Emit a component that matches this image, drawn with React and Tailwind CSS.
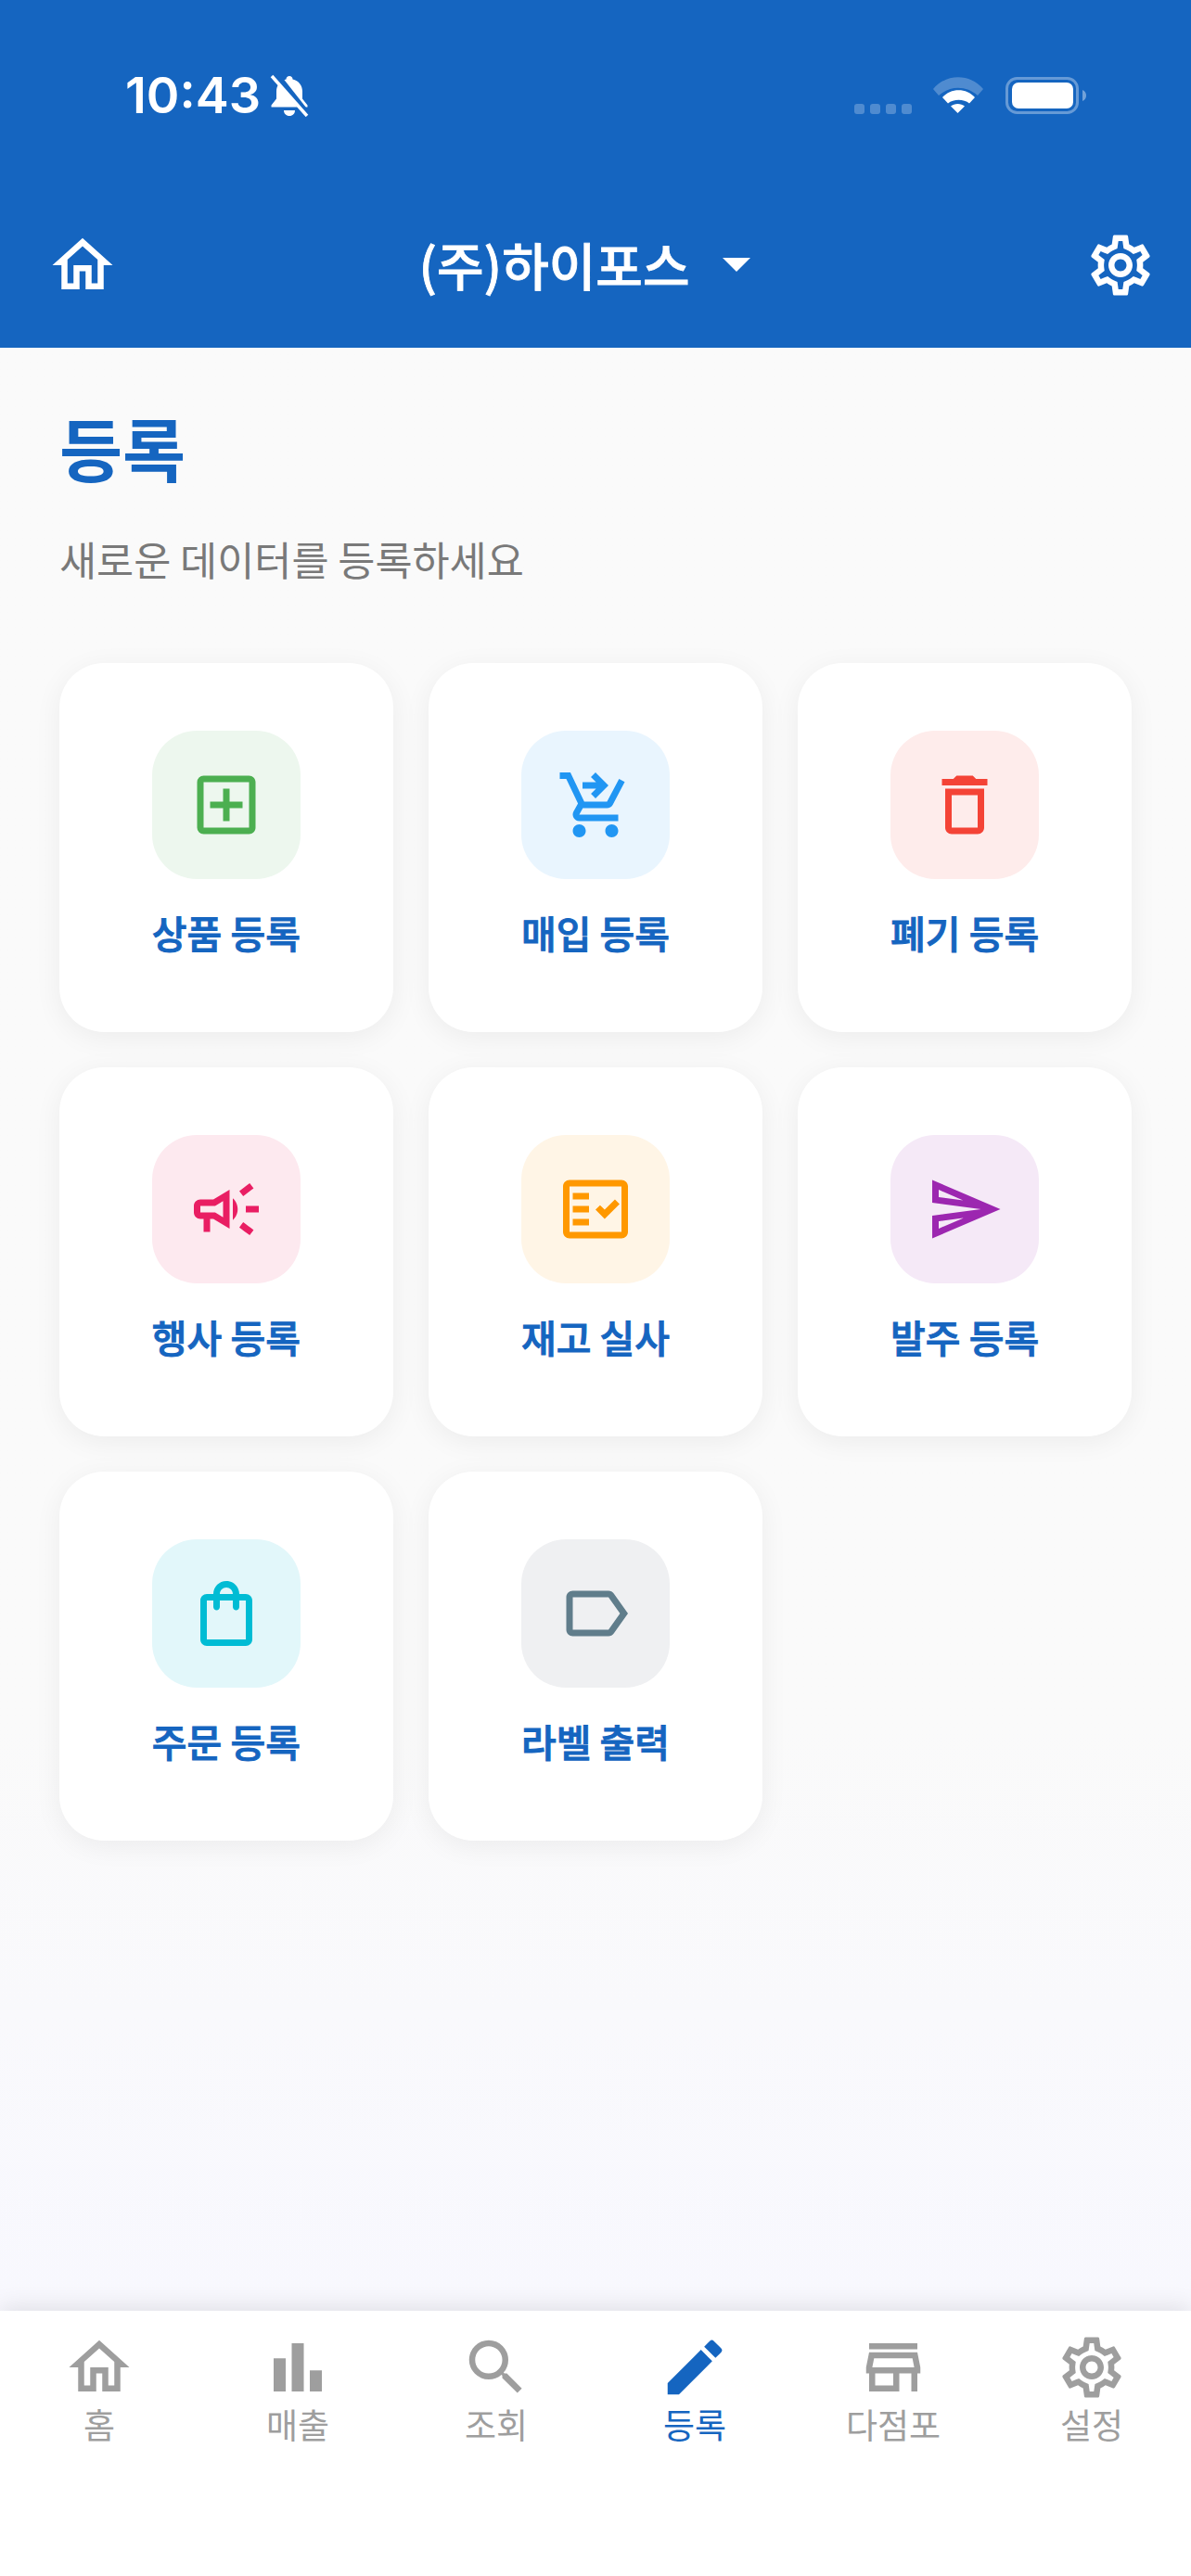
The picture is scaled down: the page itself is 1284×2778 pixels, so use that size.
import React from 'react'
import {
  MdOutlineHome, MdOutlineSettings, MdArrowDropDown, MdOutlineAddBox, MdOutlineShoppingCartCheckout,
  MdOutlineDelete, MdOutlineCampaign, MdOutlineFactCheck, MdOutlineSend, MdOutlineShoppingBag,
  MdOutlineLabel, MdBarChart, MdSearch, MdEdit, MdOutlineStore,
} from 'react-icons/md'

const items = [
  {label: '상품 등록', Icon: MdOutlineAddBox, box: 'bg-[#edf7ee]', color: 'text-[#4caf50]'},
  {label: '매입 등록', Icon: MdOutlineShoppingCartCheckout, box: 'bg-[#e9f5fe]', color: 'text-[#2196f3]'},
  {label: '폐기 등록', Icon: MdOutlineDelete, box: 'bg-[#feeceb]', color: 'text-[#f44336]'},
  {label: '행사 등록', Icon: MdOutlineCampaign, box: 'bg-[#fde9ef]', color: 'text-[#e91e63]'},
  {label: '재고 실사', Icon: MdOutlineFactCheck, box: 'bg-[#fff5e6]', color: 'text-[#ff9800]'},
  {label: '발주 등록', Icon: MdOutlineSend, box: 'bg-[#f5e9f7]', color: 'text-[#9c27b0]'},
  {label: '주문 등록', Icon: MdOutlineShoppingBag, box: 'bg-[#e2f7fa]', color: 'text-[#00bcd4]'},
  {label: '라벨 출력', Icon: MdOutlineLabel, box: 'bg-[#eff0f2]', color: 'text-[#607d8b]'},
]

const tabs = [
  {label: '홈', Icon: MdOutlineHome},
  {label: '매출', Icon: MdBarChart},
  {label: '조회', Icon: MdSearch},
  {label: '등록', Icon: MdEdit, active: true},
  {label: '다점포', Icon: MdOutlineStore},
  {label: '설정', Icon: MdOutlineSettings},
]

function BellOff(){
  return (
    <svg width="44" height="46" viewBox="0 0 44 46" className="ml-[9px]">
      <path d="M22 2c2 0 3.500 1.500 3.500 3.500 6.500 1.500 10.500 6.500 10.500 13v8l5.500 7v2H2.500v-2l5.500-7v-8c0-6.500 4-11.500 10.500-13C18.500 3.500 20 2 22 2z" fill="#fff" />
      <path d="M16 39h12c0 3.500-2.500 6-6 6s-6-2.500-6-6z" fill="#fff" />
      <path d="M8 1l33 42" stroke="#1565c0" strokeWidth="7" />
      <path d="M3 2l38 43" stroke="#fff" strokeWidth="3.500" />
    </svg>
  )
}

function StatusIcons(){
  return (
    <svg width="250" height="44" viewBox="0 0 250 44" className="mr-[113px]">
      <g fill="#fff" fillOpacity="0.25">
        <rect x="0" y="31" width="11" height="11" rx="3" />
        <rect x="17" y="31" width="11" height="11" rx="3" />
        <rect x="34" y="31" width="11" height="11" rx="3" />
        <rect x="51" y="31" width="11" height="11" rx="3" />
      </g>
      <path d="M85 15c14-17 40-17 54 0l-6 7c-12-11-30-11-42 0z" fill="#fff" fillOpacity="0.25" />
      <path d="M95 24c9-10.500 26-10.500 35 0l-6 6.500c-6-5-17-5-23 0z" fill="#fff" />
      <path d="M104 33.500c4-3.500 11-3.500 15 0L111.500 41z" fill="#fff" />
      <rect x="164.500" y="3.500" width="76" height="37" rx="11" fill="none" stroke="#fff" strokeOpacity="0.35" strokeWidth="3" />
      <rect x="170" y="8" width="66" height="28" rx="7" fill="#fff" />
      <path d="M246 16c2.500 1 4 3 4 6s-1.500 5-4 6z" fill="#fff" fillOpacity="0.4" />
    </svg>
  )
}

function Card({item}){
  const {Icon} = item
  return (
    <div className="h-[398px] rounded-[48px] bg-white shadow-[0_6px_30px_rgba(0,0,0,0.06)] flex flex-col items-center pt-[73px]">
      <div className={`w-[160px] h-[160px] rounded-[48px] flex items-center justify-center ${item.box}`}>
        <Icon size={84} className={item.color} />
      </div>
      <div className="mt-[27px] text-[41px] leading-[60px] font-medium [-webkit-text-stroke:1px_#1565c0] text-[#1565c0]">{item.label}</div>
    </div>
  )
}

export default function App(){
  return (
    <div className="w-[1284px] h-[2778px] flex flex-col overflow-hidden font-['Noto_Sans_CJK_KR','Noto_Sans',sans-serif]">
      <header className="h-[375px] shrink-0 bg-[#1565c0] text-white flex flex-col">
        <div className="h-[48px] mt-[79px] flex items-center justify-between pl-[135px]">
          <div className="flex items-center">
            <span className="font-['Inter',sans-serif] text-[54px] leading-[48px] font-semibold">10:43</span>
            <BellOff />
          </div>
          <StatusIcons />
        </div>
        <div className="mt-[121px] h-[72px] flex items-center pl-[50px] pr-[37px]">
          <MdOutlineHome size={78} className="mt-[3px]" />
          <div className="flex-1 flex items-center justify-center mr-[16px]">
            <span className="text-[55px] leading-[72px] font-medium [-webkit-text-stroke:0.8px_white]">(주)하이포스</span>
            <MdArrowDropDown size={72} className="ml-[14px]" />
          </div>
          <MdOutlineSettings size={78} className="mt-[3px]" />
        </div>
      </header>

      <main className="flex-1 bg-gradient-to-b from-[#fafafa] from-70% to-[#f8f8fe] px-[64px] pt-[62px]">
        <h1 className="text-[74px] leading-[90px] font-bold text-[#1565c0]">등록</h1>
        <p className="mt-[45px] text-[43.600px] leading-[60px] text-[#797979]">새로운 데이터를 등록하세요</p>
        <div className="mt-[83px] grid grid-cols-3 gap-x-[38.500px] gap-y-[38px]">
          {items.map(item=> <Card key={item.label} item={item} />)}
        </div>
      </main>

      <nav className="h-[286px] shrink-0 bg-white shadow-[0_-4px_24px_rgba(0,0,0,0.1)] grid grid-cols-6 pt-[22px] items-start">
        {tabs.map(({label, Icon, active})=> (
          <div key={label} className={`flex flex-col items-center ${active ? 'text-[#1565c0]' : 'text-[#9e9e9e]'}`}>
            <Icon size={78} />
            <span className="text-[37px] leading-[50px] mt-[-3px]">{label}</span>
          </div>
        ))}
      </nav>
    </div>
  )
}
